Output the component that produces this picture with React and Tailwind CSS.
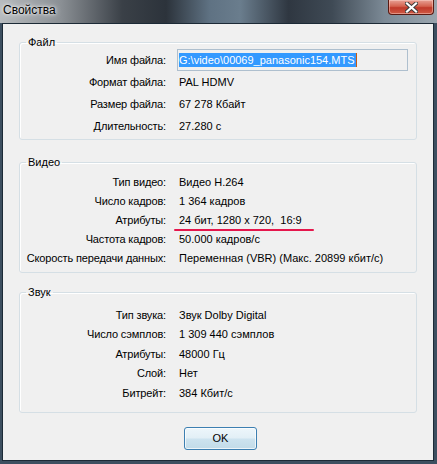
import React from 'react';

const font = { fontFamily: '"Liberation Sans", Arial, sans-serif' };

const Group = ({ title, className, children }) => (
  <fieldset className={`mx-4 rounded-[3px] border border-[#d5dfe5] shadow-[inset_1px_1px_0_#fff] ${className}`}>
    <legend className="ml-[6px] px-[2px] text-[11px] leading-[14px] text-black">{title}</legend>
    {children}
  </fieldset>
);

const Row = ({ label, h, children }) => (
  <div className={`grid grid-cols-[146px_1fr] gap-x-[13px] items-center ${h}`}>
    <div className="text-right text-[11px] leading-[14px] tracking-[-0.15px] text-black whitespace-nowrap">{label}</div>
    <div className="text-[11px] leading-[14px] text-black whitespace-nowrap">{children}</div>
  </div>
);

const CloseButton = () => (
  <div className="absolute right-[3px] top-0 w-[46px] h-[15px] rounded-b-[4px] border border-t-0 border-[#5a1a12] bg-[linear-gradient(to_bottom,#e8a195_0%,#d4624f_45%,#c0392a_55%,#cf5a44_100%)] shadow-[inset_0_0_0_1px_rgba(255,220,210,0.45)] flex items-center justify-center">
    <svg width="13" height="11" viewBox="0 0 13 11">
      <path d="M2 1.5 L11 9.5 M11 1.5 L2 9.5" stroke="#3a3a3a" strokeWidth="4" strokeLinecap="square" />
      <path d="M2 1.5 L11 9.5 M11 1.5 L2 9.5" stroke="#fff" strokeWidth="2.2" strokeLinecap="square" />
    </svg>
  </div>
);

export default function App() {
  return (
    <div style={font} className="w-[437px] h-[464px] bg-[#3d4f60] flex flex-col overflow-hidden">
      <div className="relative h-[23px] shrink-0 bg-[linear-gradient(to_right,#b7bbbe_0%,#8a8f94_14%,#3a4047_28%,#2c333b_38%,#5f7283_48%,#6a7d8d_55%,#2f3741_66%,#3f4a55_76%,#7c8a96_88%,#9aa5ae_100%)]">
        <span className="absolute left-[3px] top-[3px] text-[12px] leading-[15px] text-black [text-shadow:0_0_6px_#fff,0_0_3px_#fff]">
          Свойства
        </span>
        <CloseButton />
      </div>
      <div className="flex-1 ml-[2px] mr-[3px] mb-[3px] border border-[#1c2a36] bg-[#f0f0f0] pt-[11px] flex flex-col">
        <Group title="Файл" className="pb-[2px]">
          <Row label="Имя файла:" h="h-[22px]">
            <div className="-ml-[2px] w-[231px] h-[22px] border border-[#aebfce] bg-[#f0f0f0] flex items-center pl-[1px]">
              <span className="bg-[#3399ff] text-white leading-[14px] pr-[1px] border-r border-[#c85a10]">
                G:\video\00069_panasonic154.MTS
              </span>
            </div>
          </Row>
          <Row label="Формат файла:" h="h-[22px]">PAL HDMV</Row>
          <Row label="Размер файла:" h="h-[22px]">67 278 Кбайт</Row>
          <Row label="Длительность:" h="h-[22px]">27.280 с</Row>
        </Group>

        <Group title="Видео" className="mt-[15px] pt-[3px] pb-[5px]">
          <Row label="Тип видео:" h="h-[19px]">Видео H.264</Row>
          <Row label="Число кадров:" h="h-[19px]">1 364 кадров</Row>
          <Row label="Атрибуты:" h="h-[19px]">
            <span className="relative">
              24 бит, 1280 x 720,&nbsp; 16:9
              <span className="absolute left-[-5px] right-[-12px] top-[15px] h-[2px] rounded-full bg-[#e5174c]" />
            </span>
          </Row>
          <Row label="Частота кадров:" h="h-[19px]">50.000 кадров/с</Row>
          <Row label="Скорость передачи данных:" h="h-[19px]">Переменная (VBR) (Макс. 20899 кбит/с)</Row>
        </Group>

        <Group title="Звук" className="mt-[12px] pt-[6px] pb-[9px]">
          <Row label="Тип звука:" h="h-[19.5px]">Звук Dolby Digital</Row>
          <Row label="Число сэмплов:" h="h-[19.5px]">1 309 440 сэмплов</Row>
          <Row label="Атрибуты:" h="h-[19.5px]">48000 Гц</Row>
          <Row label="Слой:" h="h-[19.5px]">Нет</Row>
          <Row label="Битрейт:" h="h-[19.5px]">384 Кбит/с</Row>
        </Group>

        <div className="flex justify-center mt-[14px] pl-[5px]">
          <button className="w-[73px] h-[23px] rounded-[3px] border border-[#3c7fb1] bg-[linear-gradient(to_bottom,#edf6fb_0%,#e2eff6_48%,#cde3ef_52%,#c2dbe8_100%)] shadow-[inset_0_0_0_1px_rgba(255,255,255,0.7)] text-[11px] leading-[14px] text-black">
            OK
          </button>
        </div>
      </div>
    </div>
  );
}
